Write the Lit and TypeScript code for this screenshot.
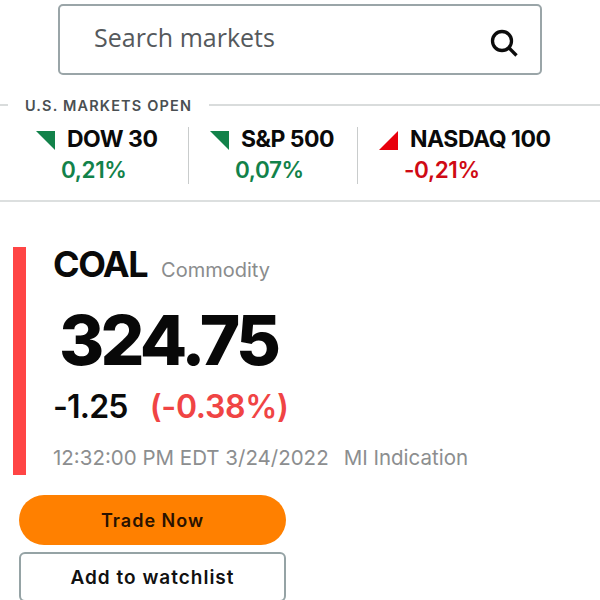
import { LitElement, html, css } from "lit";
import { customElement } from "lit/decorators.js";

type Market = { name: string; pct: string; up: boolean };
const MARKETS: Market[] = [
  { name: "DOW 30", pct: "0,21%", up: true },
  { name: "S&P 500", pct: "0,07%", up: true },
  { name: "NASDAQ 100", pct: "-0,21%", up: false },
];

@customElement("app-root")
export class AppRoot extends LitElement {
  static styles = css`
    :host { display: block; width: 600px; height: 600px; overflow: hidden; background: #fff; font-family: Inter, "Liberation Sans", sans-serif; color: #0a0a0a; }
    .searchwrap { padding: 4px 58px 0; }
    .search { box-sizing: border-box; height: 71px; border: 2px solid #9aa5a8; border-radius: 5px; display: flex; justify-content: space-between; padding: 0 22px 0 34px; }
    .search span { font-family: "Open Sans", sans-serif; font-size: 25px; line-height: 62px; color: #55595c; }
    .search svg { width: 28px; height: 28px; margin-top: 23px; }
    .status { display: flex; align-items: center; gap: 17px; margin-top: 22px; height: 16px; font-size: 14.5px; font-weight: 600; letter-spacing: 1.15px; color: #4a4f52; white-space: nowrap; }
    .rule { height: 2px; background: #d9dcdc; }
    .rule.s { width: 8px; }
    .rule.l { flex: 1; }
    .markets { display: flex; height: 57px; margin-top: 14px; padding-bottom: 16px; border-bottom: 2px solid #dcdfdf; }
    .m { box-sizing: border-box; border-right: 1px solid #c9cccc; }
    .m:nth-child(1) { width: 189px; padding-left: 36px; }
    .m:nth-child(2) { width: 169px; padding-left: 21px; }
    .m:nth-child(3) { padding-left: 21px; border-right: 0; }
    .top { display: flex; align-items: center; gap: 12px; height: 28px; margin-top: -2px; font-size: 23px; font-weight: 700; letter-spacing: -0.5px; white-space: nowrap; }
    .top svg { width: 19px; height: 19px; flex: none; margin-top: 2px; }
    .pct { font-size: 22.5px; font-weight: 600; line-height: 28px; letter-spacing: -0.4px; margin-top: 3px; margin-left: 25px; }
    .up { color: #12824a; }
    .down { color: #cf0a14; }
    .quote { display: flex; margin: 45px 0 0 13px; height: 228px; }
    .bar { width: 13px; background: #ff4545; flex: none; }
    .info { padding-left: 27px; }
    .name { display: flex; align-items: baseline; gap: 14px; margin-top: -3px; }
    .sym { font-size: 36px; font-weight: 700; line-height: 40px; letter-spacing: -1.5px; }
    .cat { font-size: 20px; color: #8a8c8d; }
    .price { font-size: 69px; font-weight: 800; line-height: 84px; margin-top: 14px; margin-left: 6px; letter-spacing: -3.7px; color: #080808; }
    .chg { display: flex; gap: 22px; font-size: 32px; font-weight: 600; line-height: 40px; margin-top: 5px; letter-spacing: -0.8px; }
    .chg b { font-weight: 600; color: #f04444; letter-spacing: -0.3px; }
    .time { display: flex; gap: 15px; font-size: 20.5px; color: #8c8e8f; margin-top: 18px; line-height: 26px; white-space: nowrap; }
    .actions { display: flex; flex-direction: column; gap: 7px; width: 267px; margin: 20px 0 0 19px; }
    .btn { box-sizing: border-box; height: 50px; display: flex; align-items: center; justify-content: center; font-size: 18px; font-weight: 600; letter-spacing: 1px; }
    .trade { background: #ff8000; border-radius: 25px; color: #2a1200; }
    .watch { border: 2px solid #95a3a5; border-radius: 6px; color: #111; font-size: 19px; background: #fff; }
  `;

  private tri(up: boolean) {
    return up
      ? html`<svg viewBox="0 0 19 19"><polygon points="0,0 19,0 19,19" fill="#12824a"/></svg>`
      : html`<svg viewBox="0 0 19 19"><polygon points="19,0 19,19 0,19" fill="#e8000c"/></svg>`;
  }

  render() {
    return html`
      <div class="searchwrap">
        <div class="search">
          <span>Search markets</span>
          <svg viewBox="0 0 28 28" fill="none" stroke="#0c0c0c" stroke-width="3.3"><circle cx="12" cy="12" r="9.5"/><line x1="19" y1="19" x2="26.5" y2="26.5"/></svg>
        </div>
      </div>
      <div class="status"><div class="rule s"></div><span>U.S. MARKETS OPEN</span><div class="rule l"></div></div>
      <div class="markets">
        ${MARKETS.map(
          (m) => html`<div class="m">
            <div class="top">${this.tri(m.up)}<span>${m.name}</span></div>
            <div class="pct ${m.up ? "up" : "down"}">${m.pct}</div>
          </div>`
        )}
      </div>
      <div class="quote">
        <div class="bar"></div>
        <div class="info">
          <div class="name"><span class="sym">COAL</span><span class="cat">Commodity</span></div>
          <div class="price">324.75</div>
          <div class="chg"><span>-1.25</span><b>(-0.38%)</b></div>
          <div class="time"><span>12:32:00 PM EDT 3/24/2022</span><span>MI Indication</span></div>
        </div>
      </div>
      <div class="actions">
        <div class="btn trade">Trade Now</div>
        <div class="btn watch">Add to watchlist</div>
      </div>
    `;
  }
}
